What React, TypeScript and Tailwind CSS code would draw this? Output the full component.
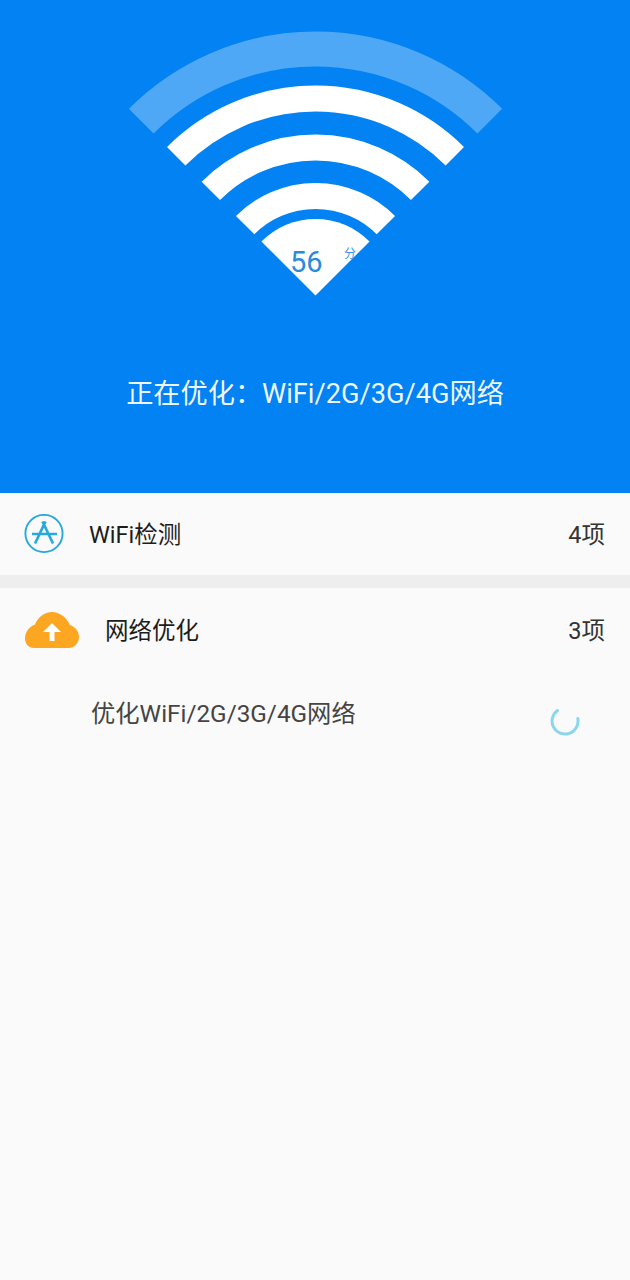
import React from "react";

const font = { fontFamily: 'Roboto, "Noto Sans CJK SC", sans-serif' };

// apex of the wifi fan inside the svg box
const cx = 190.5;
const cy = 265.5;
const k = Math.SQRT1_2;

const bands = [
  { r: 246.5, w: 35, opacity: 0.3 },
  { r: 197, w: 26, opacity: 1 },
  { r: 148, w: 26, opacity: 1 },
  { r: 99.5, w: 26, opacity: 1 },
];

function WifiFan() {
  return (
    <svg width="380" height="270" viewBox="0 0 380 270" className="block">
      {bands.map((b) => (
        <path
          key={b.r}
          d={`M${cx - b.r * k} ${cy - b.r * k}A${b.r} ${b.r} 0 0 1 ${cx + b.r * k} ${cy - b.r * k}`}
          fill="none"
          stroke="#fff"
          strokeOpacity={b.opacity}
          strokeWidth={b.w}
        />
      ))}
      <path
        d={`M${cx} ${cy}L${cx - 76.5 * k} ${cy - 76.5 * k}A76.5 76.5 0 0 1 ${cx + 76.5 * k} ${cy - 76.5 * k}Z`}
        fill="#fff"
      />
    </svg>
  );
}

function AppIcon() {
  return (
    <svg width="40" height="40" viewBox="0 0 40 40" fill="none" stroke="#27a9dc">
      <circle cx="20" cy="19.5" r="18.6" strokeWidth="1.9" />
      <path d="M21.5 7.5L11 29.5M18.5 7.5L29 29.5M8 20H33" strokeWidth="2.7" />
    </svg>
  );
}

function CloudIcon() {
  return (
    <svg width="56" height="37" viewBox="0 0 56 37">
      <path
        d="M10 36C4.5 36 1 31.5 1 26.5 1 20.5 5 14.5 11 12.5 14 5 20.5 0 28 0 36 0 42.5 5.5 46 13 51.5 15 55 19.5 55 25 55 31.5 50 36 45 36Z"
        fill="#fca622"
      />
      <path d="M28 11L37 20H30.5V29H25.5V20H19Z" fill="#fff" />
    </svg>
  );
}

function Spinner() {
  return (
    <svg width="30" height="30" viewBox="0 0 30 30" fill="none">
      <path
        d="M7.5 4.5A13 13 0 1 0 27.8 12.5"
        stroke="#8ad6ee"
        strokeWidth="3"
        strokeLinecap="round"
      />
    </svg>
  );
}

export default function App() {
  return (
    <div className="h-[1280px] w-[630px] overflow-hidden bg-[#fafafa]" style={font}>
      {/* Top score panel */}
      <div className="flex h-[493px] flex-col items-center bg-[#0383f3] pt-[30px]">
        <div className="relative h-[270px] w-[380px]">
          <WifiFan />
          <span className="absolute left-[165px] top-[211px] text-[29px] leading-[42px] text-[#2a8bdc]">56</span>
          <span className="absolute left-[219px] top-[215px] text-[12px] leading-[18px] text-[#3a98e2]">分</span>
        </div>
        <p className="mt-[74px] text-[27.2px] leading-[40px] text-white/95">正在优化：WiFi/2G/3G/4G网络</p>
      </div>

      {/* Check rows */}
      <div className="flex h-[82px] items-center pl-[24px] pr-[25px]">
        <AppIcon />
        <span className="ml-[25px] flex-1 pt-[3px] text-[23.5px] text-[#1c1c1c]">WiFi检测</span>
        <span className="pt-[3px] text-[23.5px] text-[#333]">4项</span>
      </div>
      <div className="h-[13px] bg-[#eeeeee]" />
      <div className="flex h-[84px] items-center pl-[24px] pr-[25px]">
        <CloudIcon />
        <span className="ml-[25px] flex-1 pt-[3px] text-[23.5px] text-[#1c1c1c]">网络优化</span>
        <span className="pt-[3px] text-[23.5px] text-[#333]">3项</span>
      </div>
      <div className="flex items-start pl-[91px] pr-[50px]">
        <span className="flex-1 text-[24.3px] leading-[84px] text-[#444]">优化WiFi/2G/3G/4G网络</span>
        <div className="mt-[34px]">
          <Spinner />
        </div>
      </div>
    </div>
  );
}
